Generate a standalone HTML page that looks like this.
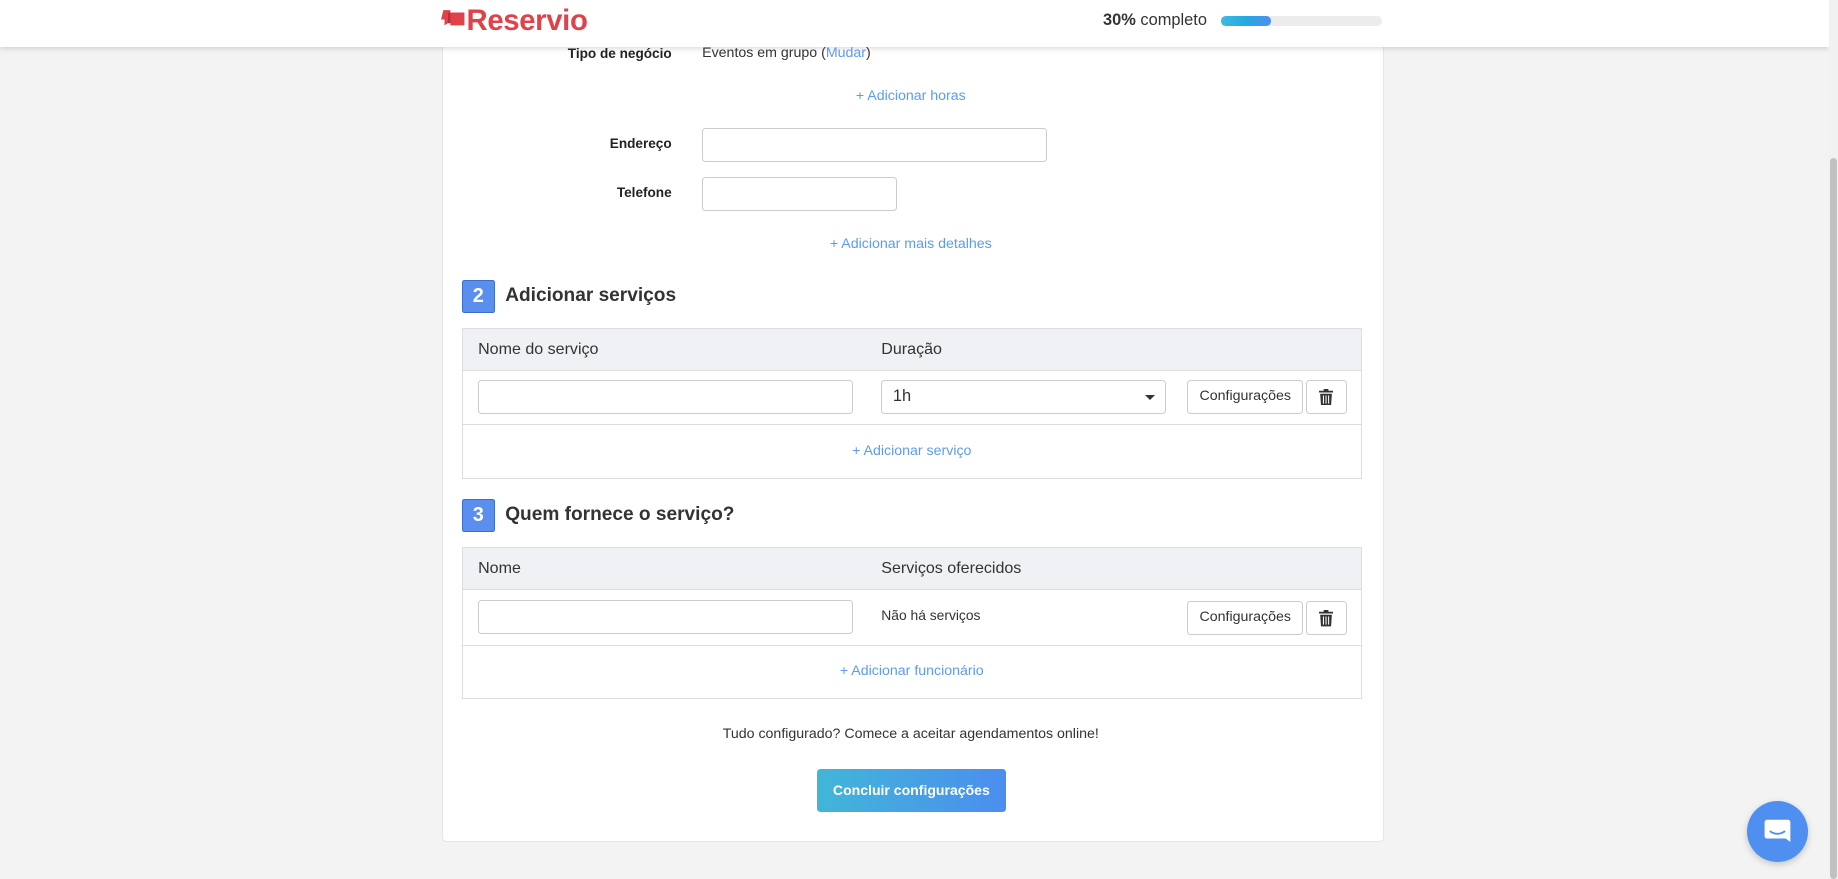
<!DOCTYPE html>
<html><head><meta charset="utf-8"><style>
html,body{margin:0;padding:0;}
body{width:1838px;height:879px;overflow:hidden;background:#f3f3f3;font-family:"Liberation Sans",sans-serif;}
#w{zoom:1.17219;width:1568px;height:750px;position:relative;overflow:hidden;color:#333;}
.a{position:absolute;}
.card{left:377px;top:-10px;width:802px;height:727px;background:#fff;border:1px solid #e6e6e6;border-radius:4px;}
.hdr{left:0;top:0;width:1560px;height:40px;background:#fff;box-shadow:0 1px 5px rgba(0,0,0,.18);}
.lbl{font-size:11.6px;font-weight:bold;text-align:right;width:200px;color:#222;}
.lnk{color:#5b9cf0;font-size:12.1px;text-align:center;width:400px;}
.inp{border:1px solid #ccc;border-radius:3px;background:#fff;box-sizing:border-box;}
.badge{width:28px;height:28px;background:#5a8eef;border:1px solid #3a6fd0;box-sizing:border-box;border-radius:2px;color:#fff;font-size:17px;font-weight:bold;text-align:center;line-height:26px;}
.h2{font-size:16.3px;font-weight:bold;color:#333;}
.tbl{left:394px;width:766px;border:1px solid #ddd;background:#fff;}
.th{position:absolute;left:0;top:0;width:766px;height:35px;background:#f0f1f4;border-bottom:1px solid #ddd;font-size:13.7px;line-height:35px;}
.btn{border:1px solid #ccc;border-radius:3px;background:#fff;font-size:12.1px;text-align:center;box-sizing:border-box;color:#333;}
</style></head><body><div id="w">
<div class="a card"></div>
<div class="a hdr"></div>
<svg class="a" style="left:376px;top:8px" width="22" height="16" viewBox="0 0 22 16"><path d="M2 1h6v2h12v11H8v-2H6L3 14V9H0z" fill="#e0424a"/><path d="M6 12V3h2v9z" fill="#b82e35"/></svg>
<div class="a" style="left:398px;top:3px;font-size:25px;font-weight:bold;color:#e0424a;letter-spacing:-.3px">Reservio</div>
<div class="a" style="left:941px;top:9px;font-size:14px;color:#333"><b>30%</b> completo</div>
<div class="a" style="left:1042px;top:14px;width:137px;height:8px;border-radius:4px;background:#ececec"></div>
<div class="a" style="left:1042px;top:14px;width:42px;height:8px;border-radius:4px;background:linear-gradient(90deg,#3fbbdf,#23a9e0 50%,#4d8ff0)"></div>
<div class="a" style="left:1560px;top:0;width:8px;height:750px;background:#f1f1f1"></div>
<div class="a" style="left:1561px;top:135px;width:6px;height:615px;background:#c1c1c1;border-radius:3px"></div>

<div class="a lbl" style="left:373px;top:39px">Tipo de negócio</div>
<div class="a" style="left:599px;top:38px;font-size:12.1px;color:#333">Eventos em grupo (<span style="color:#5b9cf0">Mudar</span>)</div>
<div class="a lnk" style="left:577px;top:75px">+ Adicionar horas</div>
<div class="a lbl" style="left:373px;top:116px">Endereço</div>
<div class="a inp" style="left:599px;top:109px;width:294px;height:29px"></div>
<div class="a lbl" style="left:373px;top:158px">Telefone</div>
<div class="a inp" style="left:599px;top:151px;width:166px;height:29px"></div>
<div class="a lnk" style="left:577px;top:201px">+ Adicionar mais detalhes</div>

<div class="a badge" style="left:394px;top:239px">2</div>
<div class="a h2" style="left:431px;top:243px">Adicionar serviços</div>
<div class="a tbl" style="top:280px;height:127px">
<div class="th"><span class="a" style="left:13px">Nome do serviço</span><span class="a" style="left:357px">Duração</span></div>
<div class="a inp" style="left:13px;top:43px;width:320px;height:29px"></div>
<div class="a inp" style="left:357px;top:43px;width:243px;height:29px;font-size:14px;line-height:27px;padding-left:9px">1h<span class="a" style="right:9px;top:12px;width:0;height:0;border-left:5px solid transparent;border-right:5px solid transparent;border-top:5px solid #333"></span></div>
<div class="a btn" style="left:618px;top:43px;width:99px;height:29px;line-height:27px">Configurações</div>
<div class="a btn" style="left:719px;top:43px;width:35px;height:29px"><svg width="12" height="14" style="margin-top:7px" viewBox="0 0 12 14"><path d="M4 0h4v1.5h4V3H0V1.5h4z M1 4h10l-.7 10H1.7z" fill="#333"/><path d="M3.8 5.5v7M6 5.5v7M8.2 5.5v7" stroke="#fff" stroke-width=".9"/></svg></div>
<div class="a" style="left:0;top:81px;width:766px;border-top:1px solid #ddd"></div>
<div class="a lnk" style="left:183px;top:97px">+ Adicionar serviço</div>
</div>

<div class="a badge" style="left:394px;top:426px">3</div>
<div class="a h2" style="left:431px;top:430px">Quem fornece o serviço?</div>
<div class="a tbl" style="top:467px;height:128px">
<div class="th"><span class="a" style="left:13px">Nome</span><span class="a" style="left:357px">Serviços oferecidos</span></div>
<div class="a inp" style="left:13px;top:44px;width:320px;height:29px"></div>
<div class="a" style="left:357px;top:50px;font-size:11.8px">Não há serviços</div>
<div class="a btn" style="left:618px;top:45px;width:99px;height:29px;line-height:27px">Configurações</div>
<div class="a btn" style="left:719px;top:45px;width:35px;height:29px"><svg width="12" height="14" style="margin-top:7px" viewBox="0 0 12 14"><path d="M4 0h4v1.5h4V3H0V1.5h4z M1 4h10l-.7 10H1.7z" fill="#333"/><path d="M3.8 5.5v7M6 5.5v7M8.2 5.5v7" stroke="#fff" stroke-width=".9"/></svg></div>
<div class="a" style="left:0;top:82px;width:766px;border-top:1px solid #ddd"></div>
<div class="a lnk" style="left:183px;top:98px">+ Adicionar funcionário</div>
</div>

<div class="a" style="left:477px;top:619px;width:600px;text-align:center;font-size:12.1px;color:#333">Tudo configurado? Comece a aceitar agendamentos online!</div>
<div class="a" style="left:697px;top:656px;width:161px;height:37px;border-radius:3px;background:linear-gradient(90deg,#41b6d8,#4b8ef0);color:#fff;font-size:12px;font-weight:bold;text-align:center;line-height:37px">Concluir configurações</div>

<div class="a" style="left:1490px;top:683px;width:52px;height:52px;border-radius:50%;background:#4e8ff0;box-shadow:0 2px 6px rgba(0,0,0,.2)"><svg width="52" height="52" viewBox="0 0 52 52"><path d="M17 16h18a2 2 0 0 1 2 2v17l-4-3H17a2 2 0 0 1-2-2V18a2 2 0 0 1 2-2z" fill="#fff"/><path d="M20 26q6 4 12 0" stroke="#4e8ff0" stroke-width="1.6" fill="none" stroke-linecap="round"/></svg></div>
</div></body></html>
